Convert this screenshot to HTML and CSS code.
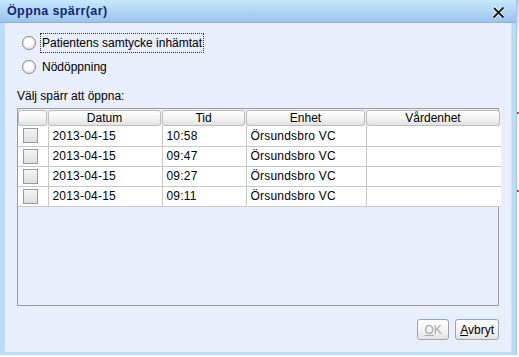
FILE: index.html
```html
<!DOCTYPE html>
<html lang="sv">

<head>
  <meta charset="UTF-8">
  <title>Öppna spärr(ar)</title>
  <link rel="stylesheet" href="styles.css">
</head>

<body>
  <div class="screen">
    <div class="dialog">
      <div class="titlebar">
        <span class="title">Öppna spärr(ar)</span>
        <svg class="close" width="13" height="13" viewBox="0 0 13 13">
          <path d="M1.5 1.5 L11.5 11.5 M11.5 1.5 L1.5 11.5" stroke="#fff" stroke-width="3.2" />
          <path d="M2 2 L11.5 11.5 M11.5 1.5 L1.5 11.5" stroke="#1a1a1a" stroke-width="1.8" />
        </svg>
      </div>
      <div class="content">
        <div class="radios">
          <label class="radio"><span class="dot"></span><span class="focus">Patientens samtycke inhämtat</span></label>
          <label class="radio"><span class="dot"></span><span class="nofocus">Nödöppning</span></label>
        </div>
        <p class="caption">Välj spärr att öppna:</p>
        <div class="grid">
          <table>
            <thead>
              <tr>
                <th class="c-check"><div class="hcell"></div></th>
                <th class="c-date"><div class="hcell">Datum</div></th>
                <th class="c-time"><div class="hcell">Tid</div></th>
                <th class="c-unit"><div class="hcell">Enhet</div></th>
                <th class="c-care"><div class="hcell">Vårdenhet</div></th>
              </tr>
            </thead>
            <tbody>
              <tr><td><span class="box"></span></td><td>2013-04-15</td><td>10:58</td><td>Örsundsbro VC</td><td></td></tr>
              <tr><td><span class="box"></span></td><td>2013-04-15</td><td>09:47</td><td>Örsundsbro VC</td><td></td></tr>
              <tr><td><span class="box"></span></td><td>2013-04-15</td><td>09:27</td><td>Örsundsbro VC</td><td></td></tr>
              <tr><td><span class="box"></span></td><td>2013-04-15</td><td>09:11</td><td>Örsundsbro VC</td><td></td></tr>
            </tbody>
          </table>
        </div>
        <div class="buttons">
          <button class="btn" disabled><u>O</u>K</button>
          <button class="btn"><u>A</u>vbryt</button>
        </div>
      </div>
    </div>
    <div class="behind"></div>
  </div>
</body>

</html>
```

FILE: styles.css
```css
* {
  box-sizing: border-box;
}

body {
  margin: 0;
  width: 519px;
  height: 357px;
  overflow: hidden;
  background: #ffffff;
  font-family: "Liberation Sans", Arial, sans-serif;
  font-size: 12px;
  color: #000;
}

.screen {
  display: flex;
}

.dialog {
  width: 517px;
  height: 355px;
  background: #b8dcf8;
  padding: 0 4px 3px 5px;
  display: flex;
  flex-direction: column;
  border-right: 1px solid #9ec6ee;
}

.behind {
  width: 2px;
  height: 355px;
  background: linear-gradient(#c8c8c8 0, #ffffff 40px, #ffffff 112px, #e23030 112px, #e23030 114px, #ffffff 114px, #ffffff 190px, #e23030 190px, #e23030 192px, #ffffff 192px);
}

.titlebar {
  height: 23px;
  margin: 0 -4px 0 -5px;
  padding: 0 0 0 7px;
  background: linear-gradient(#c6e8fe, #9cc2ec);
  border-bottom: 1px solid #8fb3e0;
  display: flex;
  align-items: center;
  justify-content: space-between;
}

.title {
  font-weight: bold;
  font-size: 12.5px;
  color: #0e2a6e;
  letter-spacing: 0.4px;
}

.close {
  margin-right: 11px;
  margin-top: 2px;
}

.content {
  flex: 1;
  background: #e8eefc;
  border-right: 1px solid #d0e0f6;
  padding: 0 12px 0 12px;
  display: flex;
  flex-direction: column;
}

.radios {
  padding: 10px 0 0 5px;
  display: flex;
  flex-direction: column;
  gap: 4px;
}

.radio {
  display: flex;
  align-items: center;
  height: 20px;
}

.dot {
  width: 14px;
  height: 14px;
  border-radius: 50%;
  border: 1px solid #7f8c9a;
  background: radial-gradient(circle at 45% 40%, #ffffff 30%, #e2e2e2 75%, #cfcfcf);
  margin-right: 4px;
}

.focus,
.nofocus {
  padding: 2px 1px 2px 1px;
  border: 1px dotted transparent;
}

.focus {
  border-color: #333;
}

.caption {
  margin: 12px 0 5px 0;
  height: 14px;
  line-height: 14px;
}

.grid {
  height: 198px;
  border: 1px solid #9c9c9c;
  background: #e8eefc;
}

table {
  border-collapse: collapse;
  width: 483px;
  table-layout: fixed;
}

th {
  padding: 0;
  font-weight: normal;
  height: 17px;
}

.hcell {
  height: 16px;
  line-height: 15px;
  text-align: center;
  border: 1px solid #bcbcbc;
  border-radius: 3px;
  margin-right: 1px;
  background: linear-gradient(#ffffff, #f4f4f4 50%, #e2e2e2);
}

.c-check { width: 30px; }
.c-date { width: 114px; }
.c-time { width: 84px; }
.c-unit { width: 120px; }
.c-care { width: 135px; }

td {
  height: 20px;
  padding: 0 0 0 4px;
  background: #ffffff;
  border: 1px solid #c8c8c8;
  border-top: 0;
  white-space: nowrap;
  letter-spacing: 0.2px;
}

td:first-child {
  border-left: 0;
  padding-left: 5px;
}

td:last-child {
  border-right: 0;
}

.box {
  display: block;
  width: 15px;
  height: 15px;
  border: 1px solid #9a9a9a;
  background: linear-gradient(#f4f4f4, #dedede);
}

.buttons {
  display: flex;
  justify-content: flex-end;
  gap: 6px;
  margin-top: 13px;
}

.btn {
  font-family: "Liberation Sans", Arial, sans-serif;
  font-size: 12px;
  height: 21px;
  padding: 0 4px;
  border: 1px solid #9aa4b2;
  border-radius: 3px;
  background: linear-gradient(#ffffff, #f2f2f2 60%, #e2e2e2);
  color: #000;
}

.btn:disabled {
  color: #a6a6a6;
  width: 32px;
}
```
